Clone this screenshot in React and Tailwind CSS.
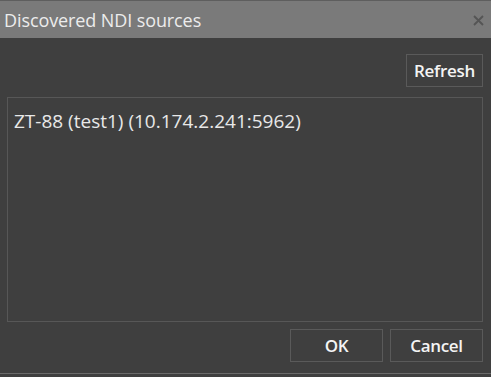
export default function App() {
  const font = { fontFamily: '"Open Sans", "Noto Sans", sans-serif' };
  return (
    <div className="w-[491px] h-[377px] bg-[#3f3f3f] flex flex-col overflow-hidden" style={font}>
      {/* title bar */}
      <div className="h-[38px] bg-[#7a7a7a] border-t border-[#5e5e5e] flex items-center pl-[4px] pr-[7px]">
        <span className="flex-1 text-[18px] text-[#ececec] leading-none tracking-[-0.1px]">Discovered NDI sources</span>
        <svg width="11" height="11" viewBox="0 0 11 11" className="mt-[2px]">
          <path d="M1 1 L10 10 M10 1 L1 10" stroke="#555" strokeWidth="1.8" />
        </svg>
      </div>

      <div className="flex-1 flex flex-col px-[7px] pt-[16px]">
        <div className="flex justify-end pr-[1px]">
          <button className="w-[77px] h-[33px] border border-[#5a5a5a] text-[#f4f4f4] text-[17px] font-semibold tracking-[-0.3px]">
            Refresh
          </button>
        </div>

        <div className="mt-[10px] w-[476px] h-[225px] border border-[#575757] px-[6px] pt-[11px]">
          <div className="text-[19px] text-[#e8e8e8] leading-[24px] tracking-[0px]">ZT-88 (test1) (10.174.2.241:5962)</div>
        </div>

        <div className="flex justify-end gap-[7px] mt-[7px] pr-[1px]">
          <button className="w-[93px] h-[33px] border border-[#5a5a5a] text-[#f4f4f4] text-[17px] font-semibold tracking-[-0.3px]">OK</button>
          <button className="w-[93px] h-[33px] border border-[#5a5a5a] text-[#f4f4f4] text-[17px] font-semibold tracking-[-0.3px]">Cancel</button>
        </div>
      </div>
      <div className="h-[4px] border-t border-[#6a6a6a] bg-[#3f3f3f]" />
    </div>
  );
}
